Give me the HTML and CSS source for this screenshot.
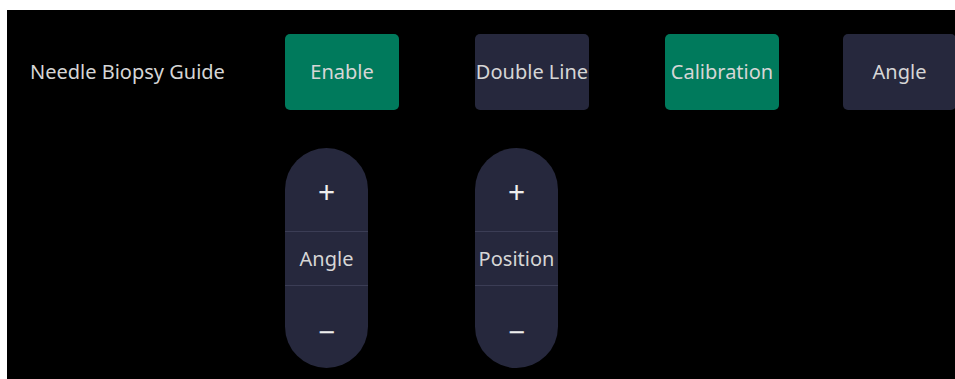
FILE: index.html
```html
<!DOCTYPE html>
<html>
<head>
<meta charset="utf-8">
<link rel="stylesheet" href="styles.css">
</head>
<body>
<div class="screen">
  <div class="row">
    <div class="label">Needle Biopsy Guide</div>
    <div class="btn green">Enable</div>
    <div class="btn navy">Double Line</div>
    <div class="btn green">Calibration</div>
    <div class="btn navy last">Angle</div>
  </div>
  <div class="steppers">
    <div class="stepper">
      <div class="step plus">+</div>
      <div class="step name">Angle</div>
      <div class="step minus">−</div>
    </div>
    <div class="stepper">
      <div class="step plus">+</div>
      <div class="step name">Position</div>
      <div class="step minus">−</div>
    </div>
  </div>
</div>
</body>
</html>
```

FILE: styles.css
```css
html, body {
  margin: 0;
  padding: 0;
  background: #ffffff;
  overflow: hidden;
}
body {
  padding: 10px 0 0 7px;
  height: 379px;
  box-sizing: border-box;
}
.screen {
  background: #000000;
  height: 369px;
  overflow: hidden;
  font-family: "Noto Sans", "Open Sans", sans-serif;
  color: #d6d6d6;
  padding: 24px 0 0 23px;
  box-sizing: border-box;
}
.row {
  display: flex;
  align-items: center;
  height: 76px;
}
.label {
  width: 255px;
  flex: none;
  font-size: 20px;
  padding-bottom: 2px;
}
.btn {
  flex: none;
  width: 114px;
  height: 76px;
  border-radius: 5px;
  display: flex;
  align-items: center;
  justify-content: center;
  font-size: 20px;
  margin-right: 76px;
  padding-bottom: 2px;
  box-sizing: border-box;
  white-space: nowrap;
}
.btn.last {
  margin-left: -12px;
  width: 113px;
  margin-right: 0;
}
.green { background: #007a5c; }
.navy { background: #26283d; }
.steppers {
  display: flex;
  gap: 107px;
  margin-top: 38px;
  padding-left: 255px;
}
.stepper {
  width: 83px;
  height: 220px;
  border-radius: 42px;
  background: #26283d;
  display: flex;
  flex-direction: column;
  overflow: hidden;
}
.step {
  display: flex;
  align-items: center;
  justify-content: center;
}
.plus {
  height: 83px;
  font-size: 30px;
  color: #eeeeee;
  padding-top: 4px;
  box-sizing: border-box;
}
.name {
  height: 55px;
  border-top: 1px solid #3b3d55;
  border-bottom: 1px solid #3b3d55;
  box-sizing: border-box;
  font-size: 20px;
  white-space: nowrap;
}
.minus {
  height: 82px;
  font-size: 30px;
  color: #eeeeee;
  padding-top: 8px;
  box-sizing: border-box;
}
```
